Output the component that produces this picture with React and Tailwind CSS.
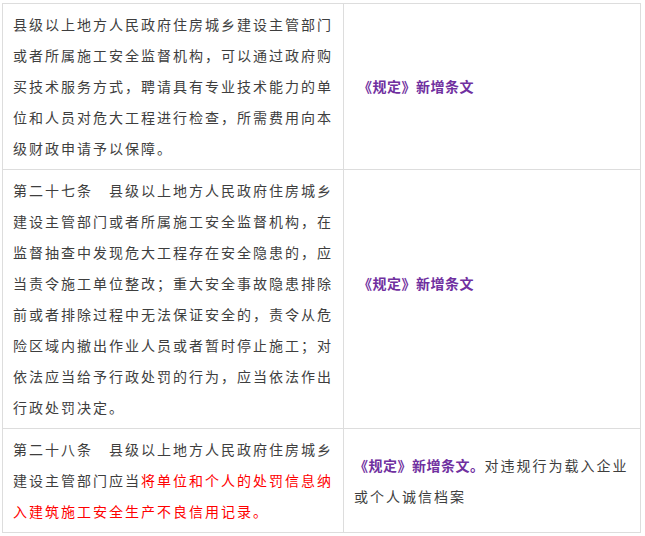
import React from 'react';

const font = { fontFamily: '"Noto Sans CJK SC", "Noto Sans", sans-serif' };

function Lines({ lines }) {
  return lines.map((l, i) => (
    <div key={i} className="whitespace-nowrap">
      {l}
    </div>
  ));
}

function Tag({ children }) {
  return <span className="font-bold text-[#7030a0] tracking-[0.5px]">{children}</span>;
}

function Row({ left, right, rightExtra, indent }) {
  return (
    <div className="grid grid-cols-[341px_1fr] border-b border-[#dddddd]">
      <div className="border-r border-[#dddddd] pl-[10px] pr-[8px] py-[5px]">
        <Lines lines={left} />
      </div>
      <div
        className={
          indent
            ? 'border-r border-[#dddddd] pl-[14px] pr-[6px] py-[5px] flex flex-col justify-center'
            : 'border-r border-[#dddddd] pl-[10px] pr-[4px] py-[5px] flex flex-col justify-center'
        }
      >
        {right}
        {rightExtra && <div>&nbsp;</div>}
      </div>
    </div>
  );
}

export default function App() {
  return (
    <div className="bg-white w-[645px] h-[536px] pt-[3px] pl-[2px]" style={font}>
      <div className="w-[639px] border-l border-t border-[#dddddd] text-[14px] leading-[31px] tracking-[2px] text-[#3e3e3e]">
        <Row
          indent
          left={[
            '县级以上地方人民政府住房城乡建设主管部门',
            '或者所属施工安全监督机构，可以通过政府购',
            '买技术服务方式，聘请具有专业技术能力的单',
            '位和人员对危大工程进行检查，所需费用向本',
            '级财政申请予以保障。',
          ]}
          right={
            <div>
              <Tag>《规定》新增条文</Tag>
            </div>
          }
        />
        <Row
          indent
          left={[
            '第二十七条　县级以上地方人民政府住房城乡',
            '建设主管部门或者所属施工安全监督机构，在',
            '监督抽查中发现危大工程存在安全隐患的，应',
            '当责令施工单位整改；重大安全事故隐患排除',
            '前或者排除过程中无法保证安全的，责令从危',
            '险区域内撤出作业人员或者暂时停止施工；对',
            '依法应当给予行政处罚的行为，应当依法作出',
            '行政处罚决定。',
          ]}
          right={
            <div>
              <Tag>《规定》新增条文</Tag>
            </div>
          }
          rightExtra
        />
        <Row
          left={[
            '第二十八条　县级以上地方人民政府住房城乡',
            <>
              建设主管部门应当<span className="text-[#ff0000]">将单位和个人的处罚信息纳</span>
            </>,
            <span className="text-[#ff0000]">入建筑施工安全生产不良信用记录。</span>,
          ]}
          right={
            <div>
              <div className="whitespace-nowrap">
                <Tag>《规定》新增条文。</Tag>对违规行为载入企业
              </div>
              <div>或个人诚信档案</div>
            </div>
          }
        />
      </div>
    </div>
  );
}
